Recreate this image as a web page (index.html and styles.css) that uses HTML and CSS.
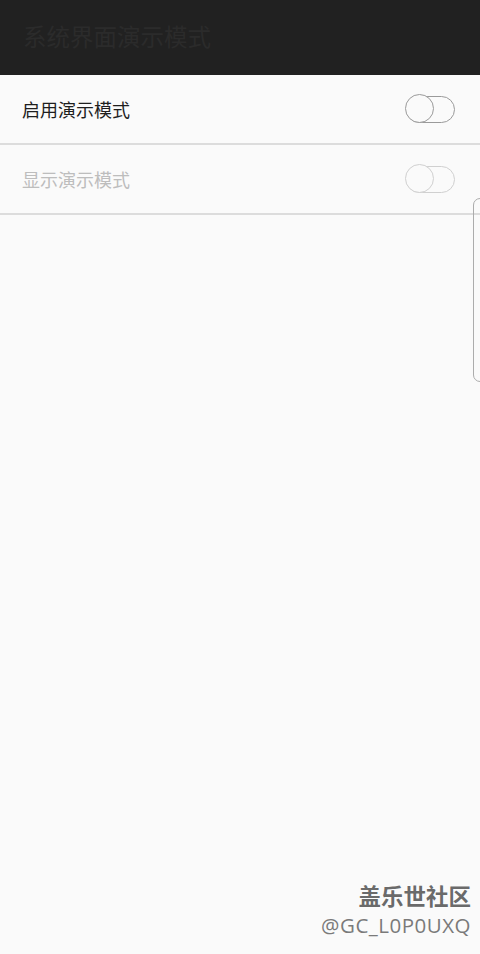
FILE: index.html
```html
<!DOCTYPE html>
<html lang="zh">
<head>
    <meta charset="UTF-8">
    <meta name="viewport" content="width=device-width, initial-scale=1.0">
    <title>系统界面演示模式</title>
    <link rel="stylesheet" href="styles.css">
</head>
<body>
    <div class="header">
        <h1 class="title">系统界面演示模式</h1>
    </div>
    <div class="list">
        <div class="row">
            <span class="label">启用演示模式</span>
            <span class="switch"><span class="knob"></span></span>
        </div>
        <div class="row disabled">
            <span class="label">显示演示模式</span>
            <span class="switch"><span class="knob"></span></span>
        </div>
    </div>
    <div class="handle"></div>
    <div class="watermark">
        <div class="wm-name">盖乐世社区</div>
        <div class="wm-id">@GC_L0P0UXQ</div>
    </div>
</body>
</html>
```

FILE: styles.css
```css
body {
    margin: 0;
    height: 954px;
    background: #fafafa;
    font-family: "Noto Sans CJK SC", "Noto Sans", sans-serif;
    position: relative;
    overflow: hidden;
}
.header {
    height: 75px;
    background: #212121;
    display: flex;
    align-items: center;
    padding-left: 23px;
}
.title {
    margin: 0 0 3px;
    font-size: 23.5px;
    font-weight: normal;
    color: #2b2b2b;
}
.row {
    height: 68px;
    display: flex;
    align-items: center;
    justify-content: space-between;
    padding: 0 25px 0 22px;
    border-bottom: 2px solid #dcdcdc;
}
.label {
    font-size: 18px;
    color: #1e1e1e;
}
.switch {
    position: relative;
    width: 47px;
    height: 25px;
    border: 1.5px solid #9a9a9a;
    border-radius: 14px;
}
.knob {
    position: absolute;
    left: -2px;
    top: -3px;
    width: 27px;
    height: 27px;
    border: 1.5px solid #9a9a9a;
    border-radius: 50%;
    background: #fafafa;
}
.disabled .label {
    color: #bdbdbd;
}
.disabled .switch,
.disabled .knob {
    border-color: #d0d0d0;
}
.handle {
    position: absolute;
    left: 473px;
    top: 198px;
    width: 12px;
    height: 182px;
    border: 1px solid #acacac;
    border-radius: 7px;
}
.watermark {
    position: absolute;
    right: 9px;
    bottom: 14px;
    text-align: right;
}
.wm-name {
    font-size: 22.5px;
    font-weight: bold;
    color: #6a6a6a;
    text-shadow: 0 0 2px #fff;
    line-height: 30px;
}
.wm-id {
    font-family: "Open Sans", "Noto Sans", sans-serif;
    font-size: 20.5px;
    color: #7a7a7a;
    line-height: 30px;
    letter-spacing: 0.5px;
}
```
